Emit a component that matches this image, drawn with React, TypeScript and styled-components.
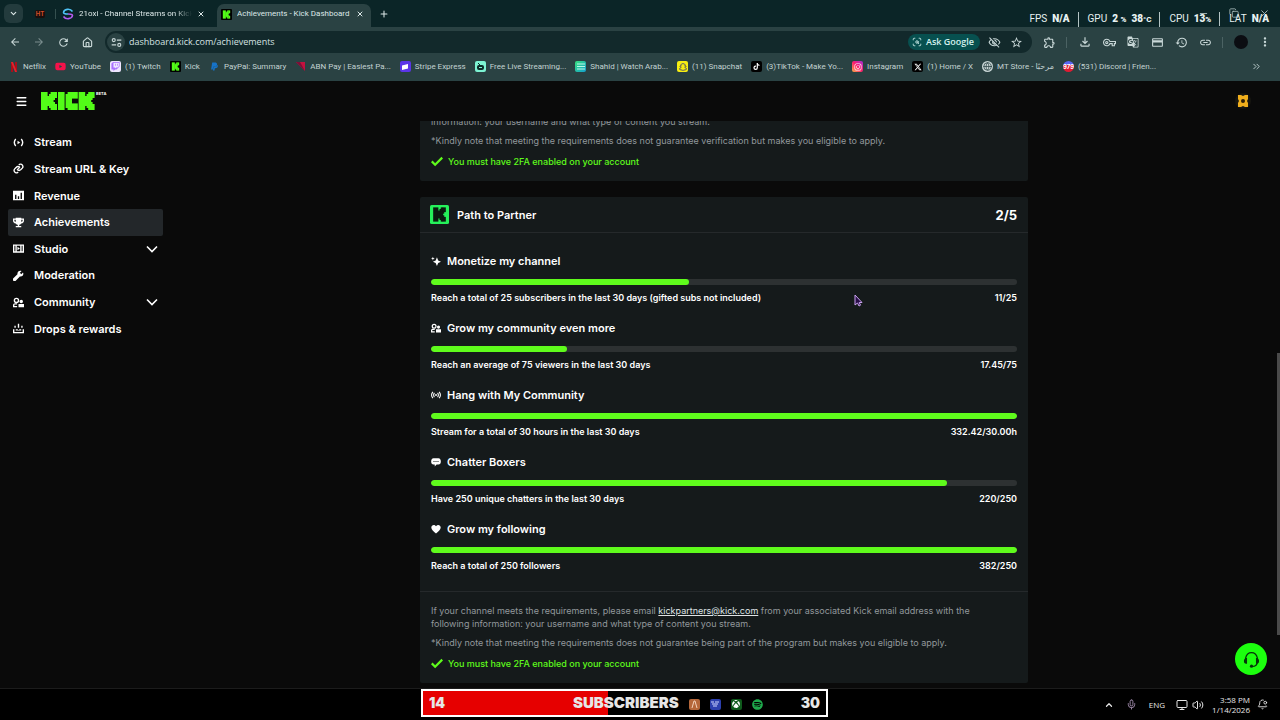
import React from "react";
import styled, { createGlobalStyle } from "styled-components";
import {
  ScanSearch, ChevronDown, ChevronUp, ChevronsRight, House,
  Plus, X, Menu, Mic, Monitor, Volume2, BellDot, Minus, Copy, Globe,
} from "lucide-react";
import {
  FaTwitch, FaYoutube, FaPaypal, FaTiktok, FaInstagram, FaSnapchat, FaXTwitter, FaSpotify, FaXbox,
} from "react-icons/fa6";
import {
  MdArrowBack, MdArrowForward, MdRefresh, MdOutlineVisibilityOff, MdStarOutline, MdOutlineExtension,
  MdOutlineFileDownload, MdOutlineVpnKey, MdGTranslate, MdCreditCard, MdHistory, MdLink, MdMoreVert,
} from "react-icons/md";

const UI = `"Open Sans", "Noto Sans", "DejaVu Sans", sans-serif`;
const UI_NARROW = `Roboto, "Noto Sans", "DejaVu Sans", sans-serif`;
const INTER = `Inter, "Liberation Sans", sans-serif`;

const Global = createGlobalStyle`
  *, *::before, *::after { box-sizing: border-box; }
  body { margin: 0; background: #0a0a0a; font-family: ${INTER}; color: #fff; }
  button { font: inherit; color: inherit; background: none; border: 0; padding: 0; }
  a { color: inherit; text-decoration: none; }
  h2, h3, p, ul { margin: 0; padding: 0; font-weight: inherit; }
  ul { list-style: none; }
  svg { display: block; flex: none; }
`;

const Screen = styled.div`
  position: relative;
  display: flex;
  flex-direction: column;
  height: 100vh;
  overflow: hidden;
`;

/* Browser chrome */

const TabStrip = styled.div`
  position: relative;
  display: flex;
  flex: none;
  align-items: flex-end;
  height: 27px;
  padding-left: 4px;
  background: #0b2527;
  color: #dce8e8;
  font: 400 8px/12px ${UI_NARROW};
`;

const TabSearch = styled.button`
  display: grid;
  place-items: center;
  width: 19px;
  height: 19px;
  margin-bottom: 4px;
  border-radius: 6px;
  background: #233b3d;
`;

const PinnedTab = styled.div`
  display: flex;
  align-items: center;
  justify-content: space-between;
  width: 33px;
  height: 23px;
  padding: 0 0 3px 12px;
`;

const PinnedMark = styled.span`
  display: grid;
  place-items: center;
  width: 10px;
  height: 8px;
  border-radius: 2px;
  background: #1b0f0d;
  color: #d4502a;
  font: 700 6px/8px ${INTER};
`;

const TabDivider = styled.span`
  width: 1px;
  height: 10px;
  background: #35504f;
`;

const Tab = styled.div<{ $active?: boolean }>`
  display: flex;
  align-items: center;
  gap: 5px;
  width: ${(p) => (p.$active ? 154 : 153)}px;
  height: 23px;
  padding: 0 ${(p) => (p.$active ? 7 : 4)}px 3px ${(p) => (p.$active ? 4 : 6)}px;
  border-radius: 7px 7px 0 0;
  margin-left: ${(p) => (p.$active ? 8 : 0)}px;
  background: ${(p) => (p.$active ? "#2a4243" : "transparent")};
`;

const TabTitle = styled.span<{ $fade?: boolean }>`
  flex: 1;
  overflow: hidden;
  white-space: nowrap;
  mask-image: ${(p) => (p.$fade ? "linear-gradient(to right, #000 85%, transparent)" : "none")};
`;

const NewTab = styled.button`
  display: grid;
  place-items: center;
  width: 26px;
  height: 23px;
  padding-bottom: 3px;
`;

const WindowControls = styled.div`
  position: absolute;
  top: 8px;
  right: 10px;
  display: flex;
  gap: 20px;
  color: #a9bcbc;
`;

const Stats = styled.div`
  position: absolute;
  top: 11px;
  right: 11px;
  display: flex;
  align-items: center;
  color: #e8f2f2;
  font: 400 10px/16px Roboto, sans-serif;
`;

const Stat = styled.span`
  display: flex;
  align-items: center;
  gap: 5px;
  & + & {
    margin-left: 8px;
    padding-left: 9px;
    border-left: 1px solid #b4c4c4;
    line-height: 14px;
  }
  b { font-weight: 900; }
  small { font-size: 8px; }
`;

const Toolbar = styled.div`
  display: flex;
  flex: none;
  align-items: center;
  height: 29px;
  padding: 1px 3px 0;
  background: #2a4243;
  color: #c9d8d8;
`;

const ToolButton = styled.button<{ $dim?: boolean }>`
  display: grid;
  place-items: center;
  flex: none;
  width: 24px;
  height: 22px;
  opacity: ${(p) => (p.$dim ? 0.5 : 1)};
`;

const ToolDivider = styled.span`
  flex: none;
  width: 1px;
  height: 11px;
  margin: 0 6px 0 5px;
  background: #4b6263;
`;

const Avatar = styled.span`
  width: 14px;
  height: 14px;
  border-radius: 50%;
  background: #0b0d12;
`;

const Address = styled.div`
  display: flex;
  align-items: center;
  flex: 1;
  height: 22px;
  margin: 0 5px 0 6px;
  padding: 0 5px 0 2px;
  border-radius: 11px;
  background: #12292b;
`;

const SiteInfo = styled.button`
  display: grid;
  place-items: center;
  width: 18px;
  height: 18px;
  border-radius: 50%;
  background: #2a4243;
`;

const Url = styled.input`
  flex: 1;
  min-width: 0;
  margin-left: 4px;
  padding: 0;
  border: 0;
  outline: 0;
  background: none;
  color: #d5e2e2;
  font: 400 9px/14px ${UI};
`;

const AskGoogle = styled.button`
  display: flex;
  align-items: center;
  gap: 4px;
  height: 16px;
  margin-right: 3px;
  padding: 0 6px 0 4px;
  border-radius: 8px;
  background: #07504f;
  color: #d3f0ee;
  font: 600 9px/16px ${UI};
`;

const SmallTool = styled(ToolButton)`
  width: 22px;
`;

const Bookmarks = styled.nav`
  display: flex;
  flex: none;
  align-items: center;
  gap: 9px;
  height: 25px;
  padding: 0 18px 4px 8px;
  background: #2a4243;
  color: #c3d2d2;
  font: 400 8px/12px ${UI_NARROW};
  > button { margin-left: auto; }
`;

const Bookmark = styled.a`
  display: flex;
  align-items: center;
  gap: 4px;
  white-space: nowrap;
`;

const Favicon = styled.span<{ $bg?: string; $fg?: string; $round?: boolean }>`
  display: grid;
  place-items: center;
  width: 11px;
  height: 11px;
  overflow: hidden;
  border-radius: ${(p) => (p.$round ? "50%" : "2px")};
  background: ${(p) => p.$bg || "transparent"};
  color: ${(p) => p.$fg || "#fff"};
  font: 700 6px/8px ${INTER};
`;

/* Dashboard */

const Header = styled.header`
  display: flex;
  flex: none;
  align-items: center;
  height: 40px;
  padding: 0 29px 0 15px;
  background: #0a0a0a;
`;

const Brand = styled.a`
  display: flex;
  align-items: flex-start;
  margin-left: 13px;
`;

const Beta = styled.span`
  margin-left: 1px;
  font: 700 4px/4px ${INTER};
`;

const Badge = styled.button`
  display: grid;
  place-items: center;
  width: 16px;
  height: 16px;
  margin-left: auto;
  border-radius: 50%;
  background: #171611;
`;

const Body = styled.div`
  position: relative;
  display: flex;
  flex: 1;
  min-height: 0;
  padding-right: 3px;
  background: #0a0a0a;
`;

const Sidebar = styled.nav`
  flex: none;
  width: 171px;
  padding: 8px 8px 0;
`;

const NavList = styled.ul`
  display: grid;
  grid-auto-rows: 1fr;
  min-height: 213px;
`;

const NavItem = styled.a<{ $active?: boolean }>`
  display: flex;
  align-items: center;
  gap: 10px;
  height: 100%;
  padding: 0 5px;
  border-radius: 2px;
  background: ${(p) => (p.$active ? "#23272a" : "transparent")};
  font: 600 11px/16px ${INTER};
  > svg:nth-of-type(2) { margin-left: auto; }
`;

const Main = styled.main`
  display: flex;
  flex: 1;
  flex-direction: column;
  align-items: center;
  justify-content: flex-end;
  gap: 16px;
  min-width: 0;
  margin-bottom: 5px;
  overflow: hidden;
`;

const Card = styled.section`
  flex: none;
  width: 100%;
  max-width: 608px;
  border-radius: 2px;
  background: #151a1b;
`;

const CardHead = styled.div`
  display: flex;
  align-items: center;
  gap: 8px;
  height: 36px;
  padding: 0 11px 0 10px;
  border-bottom: 1px solid #25292b;
  h2 { flex: 1; font: 600 11px/16px ${INTER}; }
`;

const Score = styled.span`
  font: 700 13px/16px ${INTER};
`;

const Goals = styled.ul`
  display: flex;
  flex-direction: column;
  gap: 16px;
  padding: 20px 11px 19px;
`;

const GoalTitle = styled.h3`
  display: flex;
  align-items: center;
  gap: 6px;
  font: 600 11px/16px ${INTER};
`;

const Track = styled.div`
  height: 6px;
  margin: 10px 0 6px;
  overflow: hidden;
  border-radius: 3px;
  background: #2d3132;
`;

const Fill = styled.div`
  height: 100%;
  border-radius: 3px;
  background: #5ffb1c;
`;

const GoalText = styled.div`
  display: flex;
  justify-content: space-between;
  font: 600 9px/13px ${INTER};
`;

const CardFoot = styled.div`
  display: flex;
  flex-direction: column;
  gap: 6px;
  padding: 12px 31px 12px 11px;
  border-top: 1px solid #25292b;
  color: #92989c;
  font: 400 9px/13px ${INTER};
`;

const Mail = styled.a`
  color: #dfe3e5;
  text-decoration: underline;
`;

const Requirement = styled.p`
  display: flex;
  align-items: center;
  gap: 5px;
  height: 16px;
  color: #5ffb1c;
  font-weight: 500;
`;

const ScrollThumb = styled.div`
  position: absolute;
  top: 232px;
  right: 0;
  width: 3px;
  height: 282px;
  background: #4a4a4a;
`;

const Support = styled.button`
  position: absolute;
  right: 13px;
  bottom: 45px;
  display: grid;
  place-items: center;
  width: 32px;
  height: 32px;
  border-radius: 50%;
  background: #1cff0e;
  color: #06330a;
`;

const Pointer = styled.svg`
  position: absolute;
  top: 294px;
  left: 854px;
`;

/* Desktop taskbar and stream banner */

const Taskbar = styled.footer`
  position: relative;
  display: flex;
  flex: none;
  align-items: center;
  justify-content: flex-end;
  height: 32px;
  padding-right: 12px;
  border-top: 1px solid #1c1c1c;
  background: #000;
  color: #e6e6e6;
  font: 400 8px/10px ${UI};
`;

const Tray = styled.div`
  display: flex;
  align-items: center;
  gap: 4px;
`;

const TrayGroup = styled.div`
  display: flex;
  align-items: center;
  gap: 12px;
  margin-right: 11px;
`;

const Clock = styled.time`
  margin: 0 3px 0 4px;
  text-align: right;
`;

const Banner = styled.div`
  position: absolute;
  top: 0;
  left: 421px;
  display: flex;
  align-items: center;
  width: 407px;
  height: 28px;
  padding: 0 6px;
  border: 2px solid #fff;
  background: linear-gradient(to right, #e60000 46%, #000 46%);
  font: 900 14px/20px ${INTER};
`;

const BannerTitle = styled.span`
  margin-left: auto;
  font-size: 15px;
`;

const AppIcons = styled.span`
  display: flex;
  gap: 10px;
  margin: 2px 38px 0 10px;
`;

/* Blocky K of the Kick brand, eight columns by nine rows */
const KBlocks = ({ x = 0 }: { x?: number }) => (
  <g transform={`translate(${x} 0)`}>
    <rect width="3.300" height="9" />
    <rect x="3" y="2" width="2" height="5" />
    <rect x="4" y="1" width="1.500" height="7" />
    <rect x="4.800" width="1.500" height="9" />
    <rect x="6" width="2" height="3" />
    <rect x="6" y="2.500" width="1" height="1.500" />
    <rect x="6" y="5" width="1" height="1.500" />
    <rect x="6" y="6" width="2" height="3" />
  </g>
);

const KickLogo = () => (
  <svg width="54" height="18" viewBox="0 0 27 9" fill="#53fc18" role="img" aria-label="Kick">
    <KBlocks />
    <rect x="8.500" width="3.300" height="9" />
    <rect x="12.300" y="1" width="1.200" height="7" />
    <rect x="13.300" width="2.200" height="9" />
    <rect x="15.400" width="3" height="3.300" />
    <rect x="15.400" y="5.700" width="3" height="3.300" />
    <KBlocks x={18.8} />
  </svg>
);

const KickTile = ({ size, bg, fg }: { size: number; bg: string; fg: string }) => (
  <svg width={size} height={size} viewBox="-2 -1.500 12 12">
    <rect x="-2" y="-1.500" width="12" height="12" rx="1" fill={bg} />
    <g fill={fg}><KBlocks /></g>
  </svg>
);

type GlyphName =
  | "live" | "link" | "chart" | "trophy" | "studio" | "wrench" | "people" | "drops"
  | "spark" | "signal" | "chat" | "heart" | "check" | "headset" | "tune";

const shapes: Record<GlyphName, React.ReactNode> = {
  live: (
    <>
      <path d="M4 3C1.500 6 1.500 10 4 13M12 3c2.500 3 2.500 7 0 10" fill="none" stroke="currentColor" strokeWidth="2" />
      <path d="M6.500 5.500 10.500 8l-4 2.500z" />
    </>
  ),
  link: (
    <g fill="none" stroke="currentColor" strokeWidth="2">
      <path d="M9 4.500l1-1a3.500 3.500 0 0 1 4 5.500l-2 2a4 4 0 0 1-5.500 0" transform="translate(-.5 -1.500)" />
      <path d="M7 11.500l-1 1A3.500 3.500 0 0 1 2 7l2-2a4 4 0 0 1 5.500 0" transform="translate(.5 1.500)" />
      <path d="M6 10l4-4" />
    </g>
  ),
  chart: <path fillRule="evenodd" d="M0 1h16v14H0zM3 7v6h2V7zM7 9v4h2V9zM11 4v9h2V4z" />,
  trophy: <path d="M4 1h8v1h4v3c0 2.500-1.500 4-4 4.300C11.300 10.500 10 11 9 11.300V13h3v2H4v-2h3v-1.700C6 11 4.700 10.500 4 9.300 1.500 9 0 7.500 0 5V2h4zM2 4v1c0 1 .7 1.800 2 2V4zm10 0v3c1.300-.2 2-1 2-2V4z" />,
  studio: <path fillRule="evenodd" d="M0 2h16v12H0zM2 4v8h1.500V4zM12.500 4v8H14V4zM5.500 4v8h5V4zM6.500 5.500 10 8l-3.500 2.500z" />,
  wrench: <path d="M14.500 3.500 12 6 10 4l2.500-2.500C10 0 6 1.500 6.500 6L.5 12a2.200 2.200 0 0 0 3.500 3.500l6-6c4.500.5 6-3.500 4.500-6z" />,
  people: (
    <>
      <circle cx="5" cy="5" r="3" fill="none" stroke="currentColor" strokeWidth="2" />
      <path d="M0 15v-3c0-2 1.500-3 3-3h3v2H3c-1 0-1 .5-1 1v1h4v2zM8 10h8v5H8z" />
      <circle cx="12" cy="6.500" r="2.500" />
    </>
  ),
  drops: <path d="M0 9h2v4h12V9h2v6H0zM4 9h3v1h2V9h3v2H4zM7 1h2v6H7zM2 4h2v3H2zM12 4h2v3h-2z" />,
  spark: <path d="M9.500 2 11.500 7 16 9 11.500 11 9.500 16 7.500 11 3 9 7.500 7zM3 1l.8 2.200L6 4l-2.200.8L3 7l-.8-2.200L0 4l2.200-.8z" />,
  signal: (
    <g fill="none" stroke="currentColor" strokeWidth="1.700">
      <path d="M3 3C.5 6 .5 10 3 13M13 3c2.500 3 2.500 7 0 10M5.500 4.500c-1.500 2-1.500 5 0 7M10.500 4.500c1.500 2 1.500 5 0 7" />
      <circle cx="8" cy="8" r="1.500" fill="currentColor" stroke="none" />
    </g>
  ),
  chat: <path fillRule="evenodd" d="M4 2h8c5 0 5 10 0 10H9l-3 3v-3H4C-1 12-1 2 4 2zM4 6.200v1.600h1.600V6.200zM7.200 6.200v1.600h1.600V6.200zM10.400 6.200v1.600H12V6.200z" />,
  heart: <path d="M8 15C4 12 .5 9 .5 5.500.5 1.500 5.500 0 8 3.500 10.500 0 15.500 1.500 15.500 5.500 15.500 9 12 12 8 15z" />,
  check: <path d="M1 8.500 5.500 13 15 3.500" fill="none" stroke="currentColor" strokeWidth="3" />,
  headset: (
    <>
      <path d="M2.500 8V6.500C4 0 12 0 13.500 6.500V10c0 3-2 4.500-5 4.500" fill="none" stroke="currentColor" strokeWidth="1.200" />
      <path d="M2.500 6.500h1.300V12H3c-3 0-2.500-5-.5-5.500zM13.500 6.500h-1.300V12h.8c3 0 2.500-5 .5-5.500z" />
      <circle cx="8" cy="14.300" r="1.500" />
    </>
  ),
  tune: (
    <g fill="none" stroke="currentColor" strokeWidth="1.600">
      <circle cx="4" cy="4.500" r="2.200" />
      <circle cx="12" cy="11.500" r="2.200" />
      <path d="M8.500 4.500H15M1 11.500h6.500" />
    </g>
  ),
};

const Glyph = ({ name, size }: { name: GlyphName; size: number }) => (
  <svg width={size} height={size} viewBox="0 0 16 16" fill="currentColor" aria-hidden="true">
    {shapes[name]}
  </svg>
);

const bookmarks: { label: string; icon: React.ReactNode }[] = [
  { label: "Netflix", icon: <Favicon><svg width="6" height="10" viewBox="0 0 6 10"><path fill="#a5101b" d="M0 0h2v10H0zM4 0h2v10H4z" /><path fill="#e5202b" d="M0 0h2l4 10H4z" /></svg></Favicon> },
  { label: "YouTube", icon: <Favicon $fg="#f4124a"><FaYoutube size={11} /></Favicon> },
  { label: "(1) Twitch", icon: <Favicon $fg="#a970ff" $bg="#efe6ff"><FaTwitch size={9} /></Favicon> },
  { label: "Kick", icon: <KickTile size={11} bg="#000" fg="#53fc18" /> },
  { label: "PayPal: Summary", icon: <Favicon $fg="#1673c8"><FaPaypal size={9} /></Favicon> },
  { label: "ABN Pay | Easiest Pa...", icon: <Favicon><svg width="11" height="11" viewBox="0 0 11 11"><path fill="#c3123f" d="M1 1h9v9z" /><path fill="#7c0f38" d="M1 1h4l5 9z" /></svg></Favicon> },
  { label: "Stripe Express", icon: <Favicon $bg="#5b35e8"><svg width="6" height="6" viewBox="0 0 6 6"><path fill="#fff" d="M0 1.500 6 0v4.500L0 6z" /></svg></Favicon> },
  { label: "Free Live Streaming...", icon: <Favicon $bg="#7df3d3"><svg width="9" height="9" viewBox="0 0 9 9"><rect x="1" y="3" width="7" height="5" rx="2" fill="#0b2b28" /><path d="M2 1l2 2" stroke="#0b2b28" /><path d="M3 5.500h3" stroke="#7df3d3" /></svg></Favicon> },
  { label: "Shahid | Watch Arab...", icon: <Favicon $bg="linear-gradient(135deg, #38e07c, #149fd0)"><svg width="8" height="7" viewBox="0 0 8 7"><path d="M0 1h8M0 3.500h8M0 6h8" stroke="#b9fbe4" /></svg></Favicon> },
  { label: "(11) Snapchat", icon: <Favicon $bg="#f7ee12"><FaSnapchat size={8} stroke="#333" strokeWidth={30} /></Favicon> },
  { label: "(3)TikTok - Make Yo...", icon: <Favicon $bg="#000"><FaTiktok size={7} /></Favicon> },
  { label: "Instagram", icon: <Favicon $bg="linear-gradient(45deg, #fcb045, #fd1d6d 50%, #a02fd8)"><FaInstagram size={8} /></Favicon> },
  { label: "(1) Home / X", icon: <Favicon $bg="#000"><FaXTwitter size={8} /></Favicon> },
  { label: "MT Store - مرحبًا", icon: <Favicon $round $bg="#c9d6d6" $fg="#2a4243"><Globe size={9} /></Favicon> },
  { label: "(531) Discord | Frien...", icon: <Favicon $round $bg="linear-gradient(#5865f2 40%, #e01b32 40%)">979</Favicon> },
];

const navItems: { label: string; icon: GlyphName; active?: boolean; more?: boolean }[] = [
  { label: "Stream", icon: "live" },
  { label: "Stream URL & Key", icon: "link" },
  { label: "Revenue", icon: "chart" },
  { label: "Achievements", icon: "trophy", active: true },
  { label: "Studio", icon: "studio", more: true },
  { label: "Moderation", icon: "wrench" },
  { label: "Community", icon: "people", more: true },
  { label: "Drops & rewards", icon: "drops" },
];

const goals: { title: string; icon: GlyphName; text: string; value: number; max: number; score: string }[] = [
  { title: "Monetize my channel", icon: "spark", text: "Reach a total of 25 subscribers in the last 30 days (gifted subs not included)", value: 11, max: 25, score: "11/25" },
  { title: "Grow my community even more", icon: "people", text: "Reach an average of 75 viewers in the last 30 days", value: 17.45, max: 75, score: "17.45/75" },
  { title: "Hang with My Community", icon: "signal", text: "Stream for a total of 30 hours in the last 30 days", value: 332.42, max: 30, score: "332.42/30.00h" },
  { title: "Chatter Boxers", icon: "chat", text: "Have 250 unique chatters in the last 30 days", value: 220, max: 250, score: "220/250" },
  { title: "Grow my following", icon: "heart", text: "Reach a total of 250 followers", value: 382, max: 250, score: "382/250" },
];

const TwoFactor = () => (
  <Requirement>
    <Glyph name="check" size={12} />
    You must have 2FA enabled on your account
  </Requirement>
);

export default function App() {
  return (
    <Screen>
      <Global />
      <TabStrip>
        <TabSearch aria-label="Search tabs"><ChevronDown size={9} strokeWidth={3} /></TabSearch>
        <PinnedTab><PinnedMark>HT</PinnedMark><TabDivider /></PinnedTab>
        <Tab>
          <svg width="12" height="12" viewBox="0 0 12 12" fill="none" strokeWidth="1.600">
            <path stroke="#4fc3f7" d="M10.500 3.500C8 0 2 1 1.500 4.500 1.500 6 3 6 6 6" />
            <path stroke="#b65cf0" d="M1.500 8.500C4 12 10 11 10.500 7.500 10.500 6 9 6 6 6" />
          </svg>
          <TabTitle $fade>21oxi - Channel Streams on Kick</TabTitle>
          <X size={8} strokeWidth={3} />
        </Tab>
        <Tab $active>
          <KickTile size={11} bg="#000" fg="#53fc18" />
          <TabTitle>Achievements - Kick Dashboard</TabTitle>
          <X size={8} strokeWidth={3} />
        </Tab>
        <NewTab aria-label="New tab"><Plus size={10} strokeWidth={2.5} /></NewTab>
        <WindowControls>
          <Minus size={11} /><Copy size={10} /><X size={11} />
        </WindowControls>
        <Stats>
          <Stat>FPS <b>N/A</b></Stat>
          <Stat>GPU <b>2 <small>%</small></b> <b>38<small>°C</small></b></Stat>
          <Stat>CPU <b>13<small>%</small></b></Stat>
          <Stat>LAT <b>N/A</b></Stat>
        </Stats>
      </TabStrip>

      <Toolbar>
        <ToolButton aria-label="Back"><MdArrowBack size={12} /></ToolButton>
        <ToolButton aria-label="Forward" $dim><MdArrowForward size={12} /></ToolButton>
        <ToolButton aria-label="Reload"><MdRefresh size={13} /></ToolButton>
        <ToolButton aria-label="Home"><House size={11} strokeWidth={2.5} /></ToolButton>
        <Address>
          <SiteInfo aria-label="Site information"><Glyph name="tune" size={11} /></SiteInfo>
          <Url aria-label="Address" defaultValue="dashboard.kick.com/achievements" />
          <AskGoogle><ScanSearch size={10} />Ask Google</AskGoogle>
          <SmallTool aria-label="Third-party cookies"><MdOutlineVisibilityOff size={13} /></SmallTool>
          <SmallTool aria-label="Bookmark"><MdStarOutline size={13} /></SmallTool>
        </Address>
        <ToolButton aria-label="Extensions"><MdOutlineExtension size={13} /></ToolButton>
        <ToolDivider />
        <ToolButton aria-label="Downloads"><MdOutlineFileDownload size={14} /></ToolButton>
        <ToolButton aria-label="Passwords"><MdOutlineVpnKey size={13} /></ToolButton>
        <ToolButton aria-label="Translate"><MdGTranslate size={12} /></ToolButton>
        <ToolButton aria-label="Payments"><MdCreditCard size={13} /></ToolButton>
        <ToolButton aria-label="History"><MdHistory size={13} /></ToolButton>
        <ToolButton aria-label="Copy link"><MdLink size={13} /></ToolButton>
        <ToolDivider />
        <ToolButton aria-label="Profile"><Avatar /></ToolButton>
        <ToolButton aria-label="Menu"><MdMoreVert size={14} /></ToolButton>
      </Toolbar>

      <Bookmarks>
        {bookmarks.map((b) => (
          <Bookmark key={b.label} href="#">{b.icon}{b.label}</Bookmark>
        ))}
        <button aria-label="More bookmarks"><ChevronsRight size={11} /></button>
      </Bookmarks>

      <Header>
        <button aria-label="Toggle menu"><Menu size={13} strokeWidth={2.5} /></button>
        <Brand href="#"><KickLogo /><Beta>BETA</Beta></Brand>
        <Badge aria-label="Account">
          <svg width="12" height="12" viewBox="0 0 12 12">
            <path fill="#f0ae1c" d="M1 0h3l2 1 2-1h3v4l-1 2 1 2v4H8l-2-1-2 1H1V8l1-2-1-2z" />
            <circle cx="6" cy="6" r="2" fill="#2b1d05" />
          </svg>
        </Badge>
      </Header>

      <Body>
        <Sidebar>
          <NavList>
            {navItems.map((n) => (
              <li key={n.label}>
                <NavItem href="#" $active={n.active}>
                  <Glyph name={n.icon} size={11} />
                  {n.label}
                  {n.more && (
                    <svg width="12" height="12" viewBox="0 0 12 12" fill="none" stroke="currentColor" strokeWidth="1.600">
                      <path d="M1 3.500 6 8.500 11 3.500" />
                    </svg>
                  )}
                </NavItem>
              </li>
            ))}
          </NavList>
        </Sidebar>
        <Main>
          <Card>
            <CardFoot>
              <p>information: your username and what type of content you stream.</p>
              <p>*Kindly note that meeting the requirements does not guarantee verification but makes you eligible to apply.</p>
              <TwoFactor />
            </CardFoot>
          </Card>
          <Card>
            <CardHead>
              <KickTile size={19} bg="#25f05a" fg="#0b1a10" />
              <h2>Path to Partner</h2>
              <Score>2/5</Score>
            </CardHead>
            <Goals>
              {goals.map((g) => (
                <li key={g.title}>
                  <GoalTitle><Glyph name={g.icon} size={10} />{g.title}</GoalTitle>
                  <Track role="progressbar" aria-label={g.title} aria-valuenow={g.value} aria-valuemax={g.max}>
                    <Fill style={{ width: `${Math.min(100, (g.value / g.max) * 100)}%` }} />
                  </Track>
                  <GoalText><span>{g.text}</span><span>{g.score}</span></GoalText>
                </li>
              ))}
            </Goals>
            <CardFoot>
              <p>
                If your channel meets the requirements, please email <Mail href="mailto:kickpartners@kick.com">kickpartners@kick.com</Mail> from
                your associated Kick email address with the following information: your username and what type of content you stream.
              </p>
              <p>*Kindly note that meeting the requirements does not guarantee being part of the program but makes you eligible to apply.</p>
              <TwoFactor />
            </CardFoot>
          </Card>
        </Main>
        <ScrollThumb />
      </Body>

      <Taskbar>
        <Banner>
          <span>14</span>
          <BannerTitle>SUBSCRIBERS</BannerTitle>
          <AppIcons>
            <Favicon $bg="#b5673a"><svg width="7" height="8" viewBox="0 0 7 8"><path d="M1 8 3 1h1l2 7" fill="none" stroke="#f3d3bd" /></svg></Favicon>
            <Favicon $bg="#2c3fae"><svg width="8" height="6" viewBox="0 0 8 6"><path d="M0 1h3M4 1h4M1 3h6M2 5h4" stroke="#cfd6ff" /></svg></Favicon>
            <Favicon $bg="#0f5a1c"><FaXbox size={8} /></Favicon>
            <Favicon $fg="#1faa4c"><FaSpotify size={11} /></Favicon>
          </AppIcons>
          <span>30</span>
        </Banner>
        <TrayGroup>
          <ChevronUp size={10} strokeWidth={3} />
          <Mic size={11} color="#a58fb0" />
          <span>ENG</span>
        </TrayGroup>
        <Tray>
          <Monitor size={12} />
          <Volume2 size={12} />
          <Clock>3:58 PM<br />1/14/2026</Clock>
          <BellDot size={11} />
        </Tray>
      </Taskbar>

      <Support aria-label="Support"><Glyph name="headset" size={17} /></Support>
      <Pointer width="9" height="13" viewBox="0 0 9 13">
        <path d="M1 1v10l2.500-2 1.500 3 1.500-.8L5.200 8.500H8z" fill="#2a0f4a" stroke="#c9a2ee" />
      </Pointer>
    </Screen>
  );
}
